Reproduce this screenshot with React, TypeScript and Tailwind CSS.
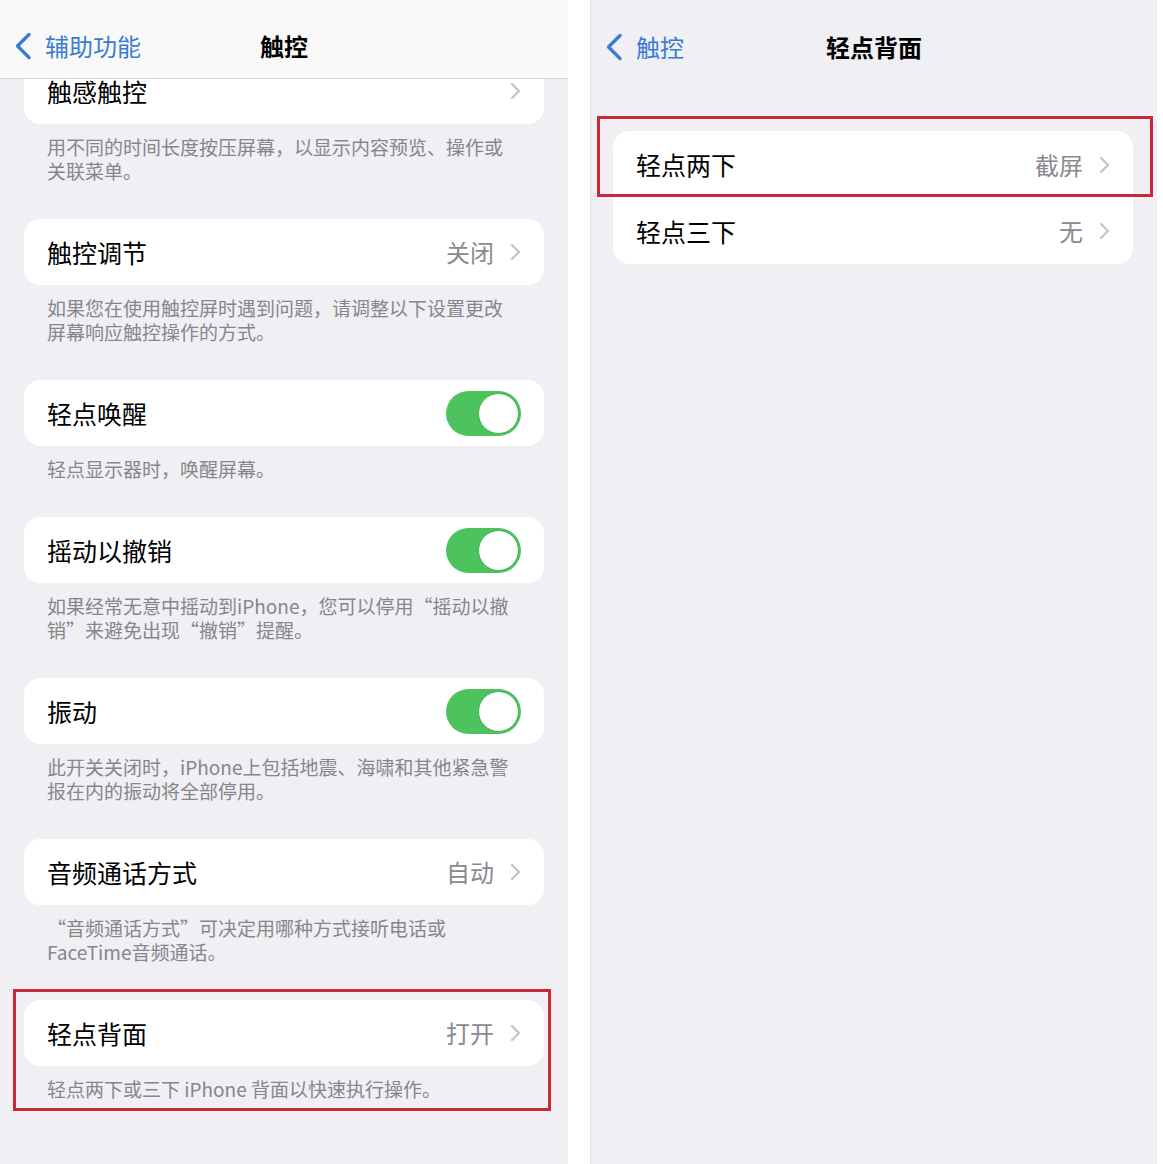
import clsx from "clsx";
import type { ReactNode } from "react";

const font = "font-['PingFang_SC','Noto_Sans_CJK_SC','Noto_Sans',sans-serif]";

const Chevron = () => (
  <svg width="11" height="18" viewBox="0 0 11 18" className="shrink-0">
    <path d="M2 2l7 7-7 7" fill="none" stroke="#c4c4c7" strokeWidth="2.2" strokeLinecap="round" strokeLinejoin="round" />
  </svg>
);

const BackChevron = () => (
  <svg width="18" height="28" viewBox="0 0 18 28" className="shrink-0">
    <path d="M15 2.5L3.5 14 15 25.5" fill="none" stroke="#3a7bd5" strokeWidth="3.4" strokeLinecap="round" strokeLinejoin="round" />
  </svg>
);

const Toggle = () => (
  <div className="w-[75px] h-[45px] rounded-full bg-[#4cc35c] p-[2px] flex justify-end">
    <div className="w-[41px] h-[41px] rounded-full bg-white border border-[#3fae4f]" />
  </div>
);

const NavBar = ({ back, title, bar }: { back: string; title: string; bar?: boolean }) => (
  <div
    className={clsx(
      "relative h-[79px] pt-[14px] flex items-center shrink-0",
      bar ? "bg-[#f9f9f9] border-b border-[#d6d6d8] z-10" : "bg-[#efeff4]"
    )}
  >
    <div className="flex items-center gap-[13px] pl-[14px]">
      <BackChevron />
      <span className="text-[24px] text-[#3a7bd5] leading-none">{back}</span>
    </div>
    <span className="absolute left-0 right-0 top-[14px] bottom-0 flex items-center justify-center text-[24px] font-bold text-black">
      {title}
    </span>
  </div>
);

const Row = ({ label, value, toggle, arrow, tall }: { label: string; value?: string; toggle?: boolean; arrow?: boolean; tall?: boolean }) => (
  <div className={clsx("pl-[23px] pr-[23px] flex items-center justify-between", tall ? "h-[67px]" : "h-[66px]")}>
    <span className="text-[25px] text-black leading-none">{label}</span>
    <div className="flex items-center gap-[16px]">
      {value && <span className="text-[24px] text-[#8a8a8e] leading-none">{value}</span>}
      {toggle && <Toggle />}
      {arrow && <Chevron />}
    </div>
  </div>
);

const Footer = ({ lines, last }: { lines: string[]; last?: boolean }) => (
  <div className={clsx("px-[23px] pt-[11px] text-[19px] leading-[24px] text-[#86868b]", last ? "pb-[7px]" : "pb-[36px]")}>
    {lines.map((l) => (
      <div key={l} className="h-[24px] whitespace-nowrap">
        {l}
      </div>
    ))}
  </div>
);

const Section = ({ children, footer }: { children: ReactNode; footer: string[] }) => (
  <div className="mx-[24px]">
    <div className="bg-white rounded-[16px]">{children}</div>
    <Footer lines={footer} />
  </div>
);

const TouchSettings = () => (
  <div className="w-[568px] h-full bg-[#efeff4] flex flex-col overflow-hidden">
    <NavBar back="辅助功能" title="触控" bar />
    <div className="-mt-[21px]">
      <Section footer={["用不同的时间长度按压屏幕，以显示内容预览、操作或", "关联菜单。"]}>
        <Row label="触感触控" arrow />
      </Section>
      <Section footer={["如果您在使用触控屏时遇到问题，请调整以下设置更改", "屏幕响应触控操作的方式。"]}>
        <Row label="触控调节" value="关闭" arrow />
      </Section>
      <Section footer={["轻点显示器时，唤醒屏幕。"]}>
        <Row label="轻点唤醒" toggle />
      </Section>
      <Section footer={["如果经常无意中摇动到iPhone，您可以停用“摇动以撤", "销”来避免出现“撤销”提醒。"]}>
        <Row label="摇动以撤销" toggle />
      </Section>
      <Section footer={["此开关关闭时，iPhone上包括地震、海啸和其他紧急警", "报在内的振动将全部停用。"]}>
        <Row label="振动" toggle />
      </Section>
      <Section footer={["“音频通话方式”可决定用哪种方式接听电话或", "FaceTime音频通话。"]}>
        <Row label="音频通话方式" value="自动" arrow />
      </Section>
      <div className="-mt-[11px] ml-[13px] w-[538px] border-[3px] border-[#c8283a] pt-[8px] pl-[8px] pr-[4px]">
        <div className="bg-white rounded-[16px]">
          <Row label="轻点背面" value="打开" arrow />
        </div>
        <Footer lines={["轻点两下或三下 iPhone 背面以快速执行操作。"]} last />
      </div>
    </div>
  </div>
);

const BackTap = () => (
  <div className="w-[567px] h-full bg-[#efeff4] flex flex-col border-l border-[#e4e4e8]">
    <NavBar back="触控" title="轻点背面" />
    <div className="relative mt-[52px] ml-[22px] w-[520px] bg-white rounded-[16px]">
      <Row label="轻点两下" value="截屏" arrow tall />
      <Row label="轻点三下" value="无" arrow />
      {/* highlight frame around the first row */}
      <div className="absolute -top-[15px] -left-[16px] -right-[20px] h-[81px] border-[3px] border-[#c8283a] pointer-events-none" />
    </div>
  </div>
);

export default function App() {
  return (
    <div className={clsx("w-[1163px] h-[1164px] bg-white flex", font)}>
      <TouchSettings />
      <div className="w-[22px] shrink-0 bg-white" />
      <BackTap />
    </div>
  );
}
